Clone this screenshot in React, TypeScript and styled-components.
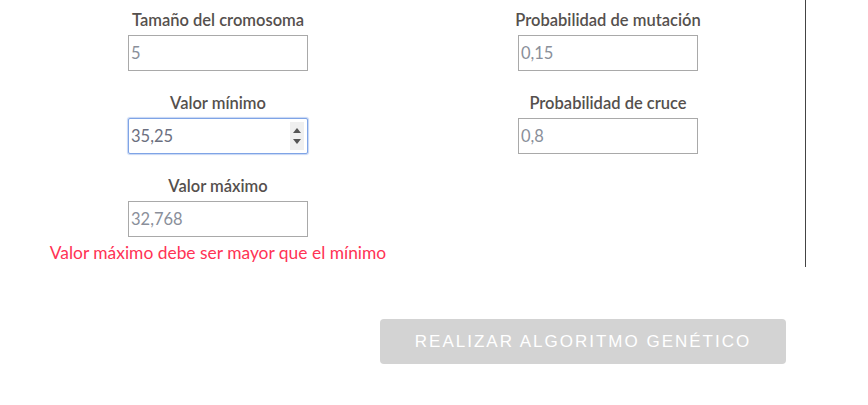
import * as React from 'react'
import styled, { createGlobalStyle } from 'styled-components'

const GlobalStyle = createGlobalStyle`
  body {
    margin: 0;
    background: #fff;
    font-family: Lato, "Open Sans", sans-serif;
  }
`

const Page = styled.div`
  width: 868px;
  height: 405px;
  display: flex;
  flex-direction: column;
`

const Top = styled.div`
  display: flex;
  flex-direction: row;
`

const FormArea = styled.div`
  width: 780px;
  margin-left: 23px;
  display: grid;
  grid-template-columns: 390px 390px;
  align-items: start;
  height: 267px;
`

const Divider = styled.div`
  width: 1px;
  height: 267px;
  margin-left: 2px;
  background: #444;
`

const Column = styled.div`
  display: flex;
  flex-direction: column;
  align-items: center;
  padding-top: 10px;
`

const Field = styled.div`
  display: flex;
  flex-direction: column;
  align-items: center;
  margin-bottom: 22px;
`

const Label = styled.label`
  font-size: 16.5px;
  font-weight: 600;
  color: #55504d;
  height: 20px;
  line-height: 20px;
  margin-bottom: 5px;
  white-space: nowrap;
`

const InputWrap = styled.div`
  position: relative;
  width: 180px;
  height: 36px;
`

const InputField = styled.input<{ $focused?: boolean }>`
  box-sizing: border-box;
  width: 180px;
  height: 36px;
  padding: 0 0 0 2px;
  margin: 0;
  font-family: Lato, "Open Sans", sans-serif;
  font-size: 16.5px;
  color: ${p => (p.$focused ? '#6b6f80' : '#8a8f9a')};
  border: 1px solid ${p => (p.$focused ? '#7fa4e6' : '#a9a9a9')};
  border-radius: ${p => (p.$focused ? '2px' : '0')};
  box-shadow: ${p => (p.$focused ? '0 0 1px 1px #c6d6f4' : 'none')};
  outline: none;
  background: #fff;
  caret-color: #222;
`

const Spinner = styled.div`
  position: absolute;
  right: 4px;
  top: 4px;
  width: 14px;
  height: 28px;
  background: #efefef;
  display: flex;
  flex-direction: column;
  align-items: center;
  justify-content: space-around;
  padding: 3px 0;
  box-sizing: border-box;
`

const Arrow = styled.div<{ $up?: boolean }>`
  width: 0;
  height: 0;
  border-left: 4px solid transparent;
  border-right: 4px solid transparent;
  ${p => (p.$up ? 'border-bottom: 5px solid #555;' : 'border-top: 5px solid #555;')}
`

const ErrorText = styled.div`
  font-size: 17.4px;
  color: #ff3355;
  margin-top: 5px;
  white-space: nowrap;
`

const ButtonRow = styled.div`
  display: flex;
  padding-left: 380px;
  padding-top: 52px;
`

const SubmitButton = styled.button`
  width: 406px;
  height: 45px;
  background: #d3d3d3;
  border: none;
  border-radius: 4px;
  color: #fff;
  font-family: "Liberation Sans", Arial, sans-serif;
  font-size: 17px;
  letter-spacing: 2px;
  text-transform: uppercase;
  padding: 0;
`

const Input = ({ value, focused }: { value: string; focused?: boolean }) => (
  <InputWrap>
    <InputField type="text" defaultValue={value} $focused={focused} autoFocus={focused} readOnly={!focused} />
    {focused && (
      <Spinner>
        <Arrow $up />
        <Arrow />
      </Spinner>
    )}
  </InputWrap>
)

export default function App() {
  return (
    <Page>
      <GlobalStyle />
      <Top>
        <FormArea>
          <Column>
            <Field>
              <Label>Tamaño del cromosoma</Label>
              <Input value="5" />
            </Field>
            <Field>
              <Label>Valor mínimo</Label>
              <Input value="35,25" focused />
            </Field>
            <Field>
              <Label>Valor máximo</Label>
              <Input value="32,768" />
              <ErrorText>Valor máximo debe ser mayor que el mínimo</ErrorText>
            </Field>
          </Column>
          <Column>
            <Field>
              <Label>Probabilidad de mutación</Label>
              <Input value="0,15" />
            </Field>
            <Field>
              <Label>Probabilidad de cruce</Label>
              <Input value="0,8" />
            </Field>
          </Column>
        </FormArea>
        <Divider />
      </Top>
      <ButtonRow>
        <SubmitButton disabled>Realizar algoritmo genético</SubmitButton>
      </ButtonRow>
    </Page>
  )
}
